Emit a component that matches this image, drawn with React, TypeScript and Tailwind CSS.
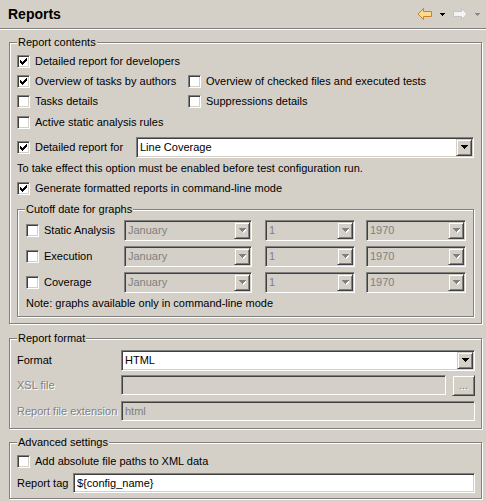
import React from "react";

// ============================================
// Classic Windows-style primitives
// ============================================

const sunken =
  "border border-t-[#808080] border-l-[#808080] border-b-white border-r-white shadow-[inset_1px_1px_0_#404040,inset_-1px_-1px_0_#d4d0c8]";
const raised =
  "border border-t-[#d4d0c8] border-l-[#d4d0c8] border-b-[#404040] border-r-[#404040] shadow-[inset_1px_1px_0_#fff,inset_-1px_-1px_0_#808080]";

function Check({ checked }: { checked?: boolean }) {
  return (
    <span className={`flex h-[13px] w-[13px] shrink-0 items-center justify-center bg-white ${sunken}`}>
      {checked && (
        <svg width="7" height="7" viewBox="0 0 7 7" shapeRendering="crispEdges">
          <path d="M0 2h1v1h1v1h1v-1h1v-1h1v-1h1v-1h1v3h-1v1h-1v1h-1v1h-1v1h-1v-1h-1v-1h-1z" fill="#000" />
        </svg>
      )}
    </span>
  );
}

function CheckRow({ checked, label }: { checked?: boolean; label: string }) {
  return (
    <label className="flex items-center gap-[5px] whitespace-nowrap">
      <Check checked={checked} />
      <span>{label}</span>
    </label>
  );
}

function Arrow({ disabled }: { disabled?: boolean }) {
  return (
    <span className={`flex h-[17px] w-[16px] shrink-0 items-center justify-center bg-[#d4d0c8] ${raised}`}>
      <svg width="7" height="5" viewBox="0 0 7 5" shapeRendering="crispEdges">
        {disabled && <path d="M1 1h7l-3.5 4z" fill="#fff" />}
        <path d="M0 0h7l-3.5 4z" fill={disabled ? "#808080" : "#000"} />
      </svg>
    </span>
  );
}

function Combo({
  value,
  disabled,
  className = "",
}: {
  value: string;
  disabled?: boolean;
  className?: string;
}) {
  return (
    <div
      className={`flex h-[21px] items-center ${sunken} ${
        disabled ? "bg-[#d4d0c8] text-[#808080]" : "bg-white text-black"
      } ${className}`}
    >
      <span className="flex-1 truncate pl-[3px]">{value}</span>
      <span className="pr-px">
        <Arrow disabled={disabled} />
      </span>
    </div>
  );
}

function Field({
  value = "",
  disabled,
  className = "",
}: {
  value?: string;
  disabled?: boolean;
  className?: string;
}) {
  return (
    <div
      className={`flex h-[20px] items-center pl-[3px] ${sunken} ${
        disabled ? "bg-[#d4d0c8] text-[#808080]" : "bg-white text-black"
      } ${className}`}
    >
      {value}
    </div>
  );
}

function Group({
  title,
  className = "",
  children,
}: {
  title: string;
  className?: string;
  children: React.ReactNode;
}) {
  return (
    <div
      className={`relative border border-[#808080] shadow-[1px_1px_0_#fff,inset_1px_1px_0_#fff] ${className}`}
    >
      <span className="absolute -top-[7px] left-[7px] bg-[#d4d0c8] px-px leading-[13px]">
        {title}
      </span>
      {children}
    </div>
  );
}

// ============================================
// Main Component
// ============================================

const months = ["Static Analysis", "Execution", "Coverage"];

export default function App() {
  return (
    <div className="h-[501px] w-[486px] overflow-hidden bg-[#d4d0c8] font-['Liberation_Sans',Arial,sans-serif] text-[11px] leading-[13px] text-black">
      {/* Header */}
      <div className="flex h-[28px] items-center justify-between pl-[8px] pr-[6px]">
        <h1 className="text-[14px] font-bold leading-[16px]">Reports</h1>
        <div className="flex items-center">
          <svg width="16" height="12" viewBox="0 0 16 12">
            <path
              d="M1 6 L6.5 0.5 V3.5 H14.5 V8.5 H6.5 V11.5 Z"
              fill="#ffd98a"
              stroke="#c8802a"
              strokeLinejoin="round"
            />
          </svg>
          <svg className="ml-[7px]" width="5" height="3" viewBox="0 0 5 3" shapeRendering="crispEdges">
            <path d="M0 0h5l-2.5 3z" fill="#000" />
          </svg>
          <svg className="ml-[7px]" width="16" height="12" viewBox="0 0 16 12">
            <path
              d="M15 6 L9.5 0.5 V3.5 H1.5 V8.5 H9.5 V11.5 Z"
              fill="#f4f4f4"
              stroke="#c4c4c4"
              strokeLinejoin="round"
            />
          </svg>
          <svg className="ml-[7px]" width="5" height="3" viewBox="0 0 5 3" shapeRendering="crispEdges">
            <path d="M0 0h5l-2.5 3z" fill="#8a8a8a" />
          </svg>
        </div>
      </div>
      <div className="h-px bg-[#808080]" />
      <div className="h-px bg-white" />

      <div className="pl-[9px] pr-[4px]">
        {/* Report contents */}
        <Group title="Report contents" className="mt-[12px] pb-[6px] pl-[7px] pr-[7px] pt-[8px]">
          <div className="grid grid-cols-[171px_1fr]">
            <div className="col-span-2 flex h-[20px] items-center">
              <CheckRow checked label="Detailed report for developers" />
            </div>
            <div className="flex h-[20px] items-center">
              <CheckRow checked label="Overview of tasks by authors" />
            </div>
            <div className="flex h-[20px] items-center">
              <CheckRow label="Overview of checked files and executed tests" />
            </div>
            <div className="flex h-[21px] items-center">
              <CheckRow label="Tasks details" />
            </div>
            <div className="flex h-[21px] items-center">
              <CheckRow label="Suppressions details" />
            </div>
            <div className="col-span-2 flex h-[21px] items-center">
              <CheckRow label="Active static analysis rules" />
            </div>
          </div>
          <div className="flex h-[28px] items-center">
            <div className="w-[119px]">
              <CheckRow checked label="Detailed report for" />
            </div>
            <Combo value="Line Coverage" className="flex-1" />
          </div>
          <div className="flex h-[14px] items-center">
            To take effect this option must be enabled before test configuration run.
          </div>
          <div className="flex h-[26px] items-center">
            <CheckRow checked label="Generate formatted reports in command-line mode" />
          </div>

          {/* Cutoff date */}
          <Group title="Cutoff date for graphs" className="mt-[8px] pb-[5px] pl-[8px] pr-[7px] pt-[7px]">
            {months.map((m) => (
              <div key={m} className="flex h-[26px] items-center">
                <div className="w-[98px]">
                  <CheckRow label={m} />
                </div>
                <Combo value="January" disabled className="w-[128px]" />
                <Combo value="1" disabled className="ml-[13px] w-[90px]" />
                <Combo value="1970" disabled className="ml-[11px] w-[100px]" />
              </div>
            ))}
            <div className="flex h-[16px] items-center">
              Note: graphs available only in command-line mode
            </div>
          </Group>
        </Group>

        {/* Report format */}
        <Group title="Report format" className="mt-[14px] pb-[4px] pl-[7px] pr-[6px] pt-[9px]">
          <div className="flex h-[24px] items-center">
            <span className="w-[104px]">Format</span>
            <Combo value="HTML" className="flex-1" />
          </div>
          <div className="flex h-[26px] items-center">
            <span className="w-[104px] text-[#808080] [text-shadow:1px_1px_0_#fff]">XSL file</span>
            <Field disabled className="flex-1" />
            <button
              className={`ml-[6px] flex h-[21px] w-[23px] items-center justify-center bg-[#d4d0c8] text-[#808080] [text-shadow:1px_1px_0_#fff] ${raised}`}
            >
              ...
            </button>
          </div>
          <div className="flex h-[26px] items-center">
            <span className="w-[104px] whitespace-nowrap text-[#808080] [text-shadow:1px_1px_0_#fff]">
              Report file extension
            </span>
            <Field value="html" disabled className="flex-1" />
          </div>
        </Group>

        {/* Advanced settings */}
        <Group title="Advanced settings" className="mt-[13px] pb-[4px] pl-[7px] pr-[6px] pt-[7px]">
          <div className="flex h-[22px] items-center">
            <CheckRow label="Add absolute file paths to XML data" />
          </div>
          <div className="flex h-[22px] items-center">
            <span className="w-[56px]">Report tag</span>
            <Field value={"${config_name}"} className="flex-1" />
          </div>
        </Group>
      </div>
    </div>
  );
}
